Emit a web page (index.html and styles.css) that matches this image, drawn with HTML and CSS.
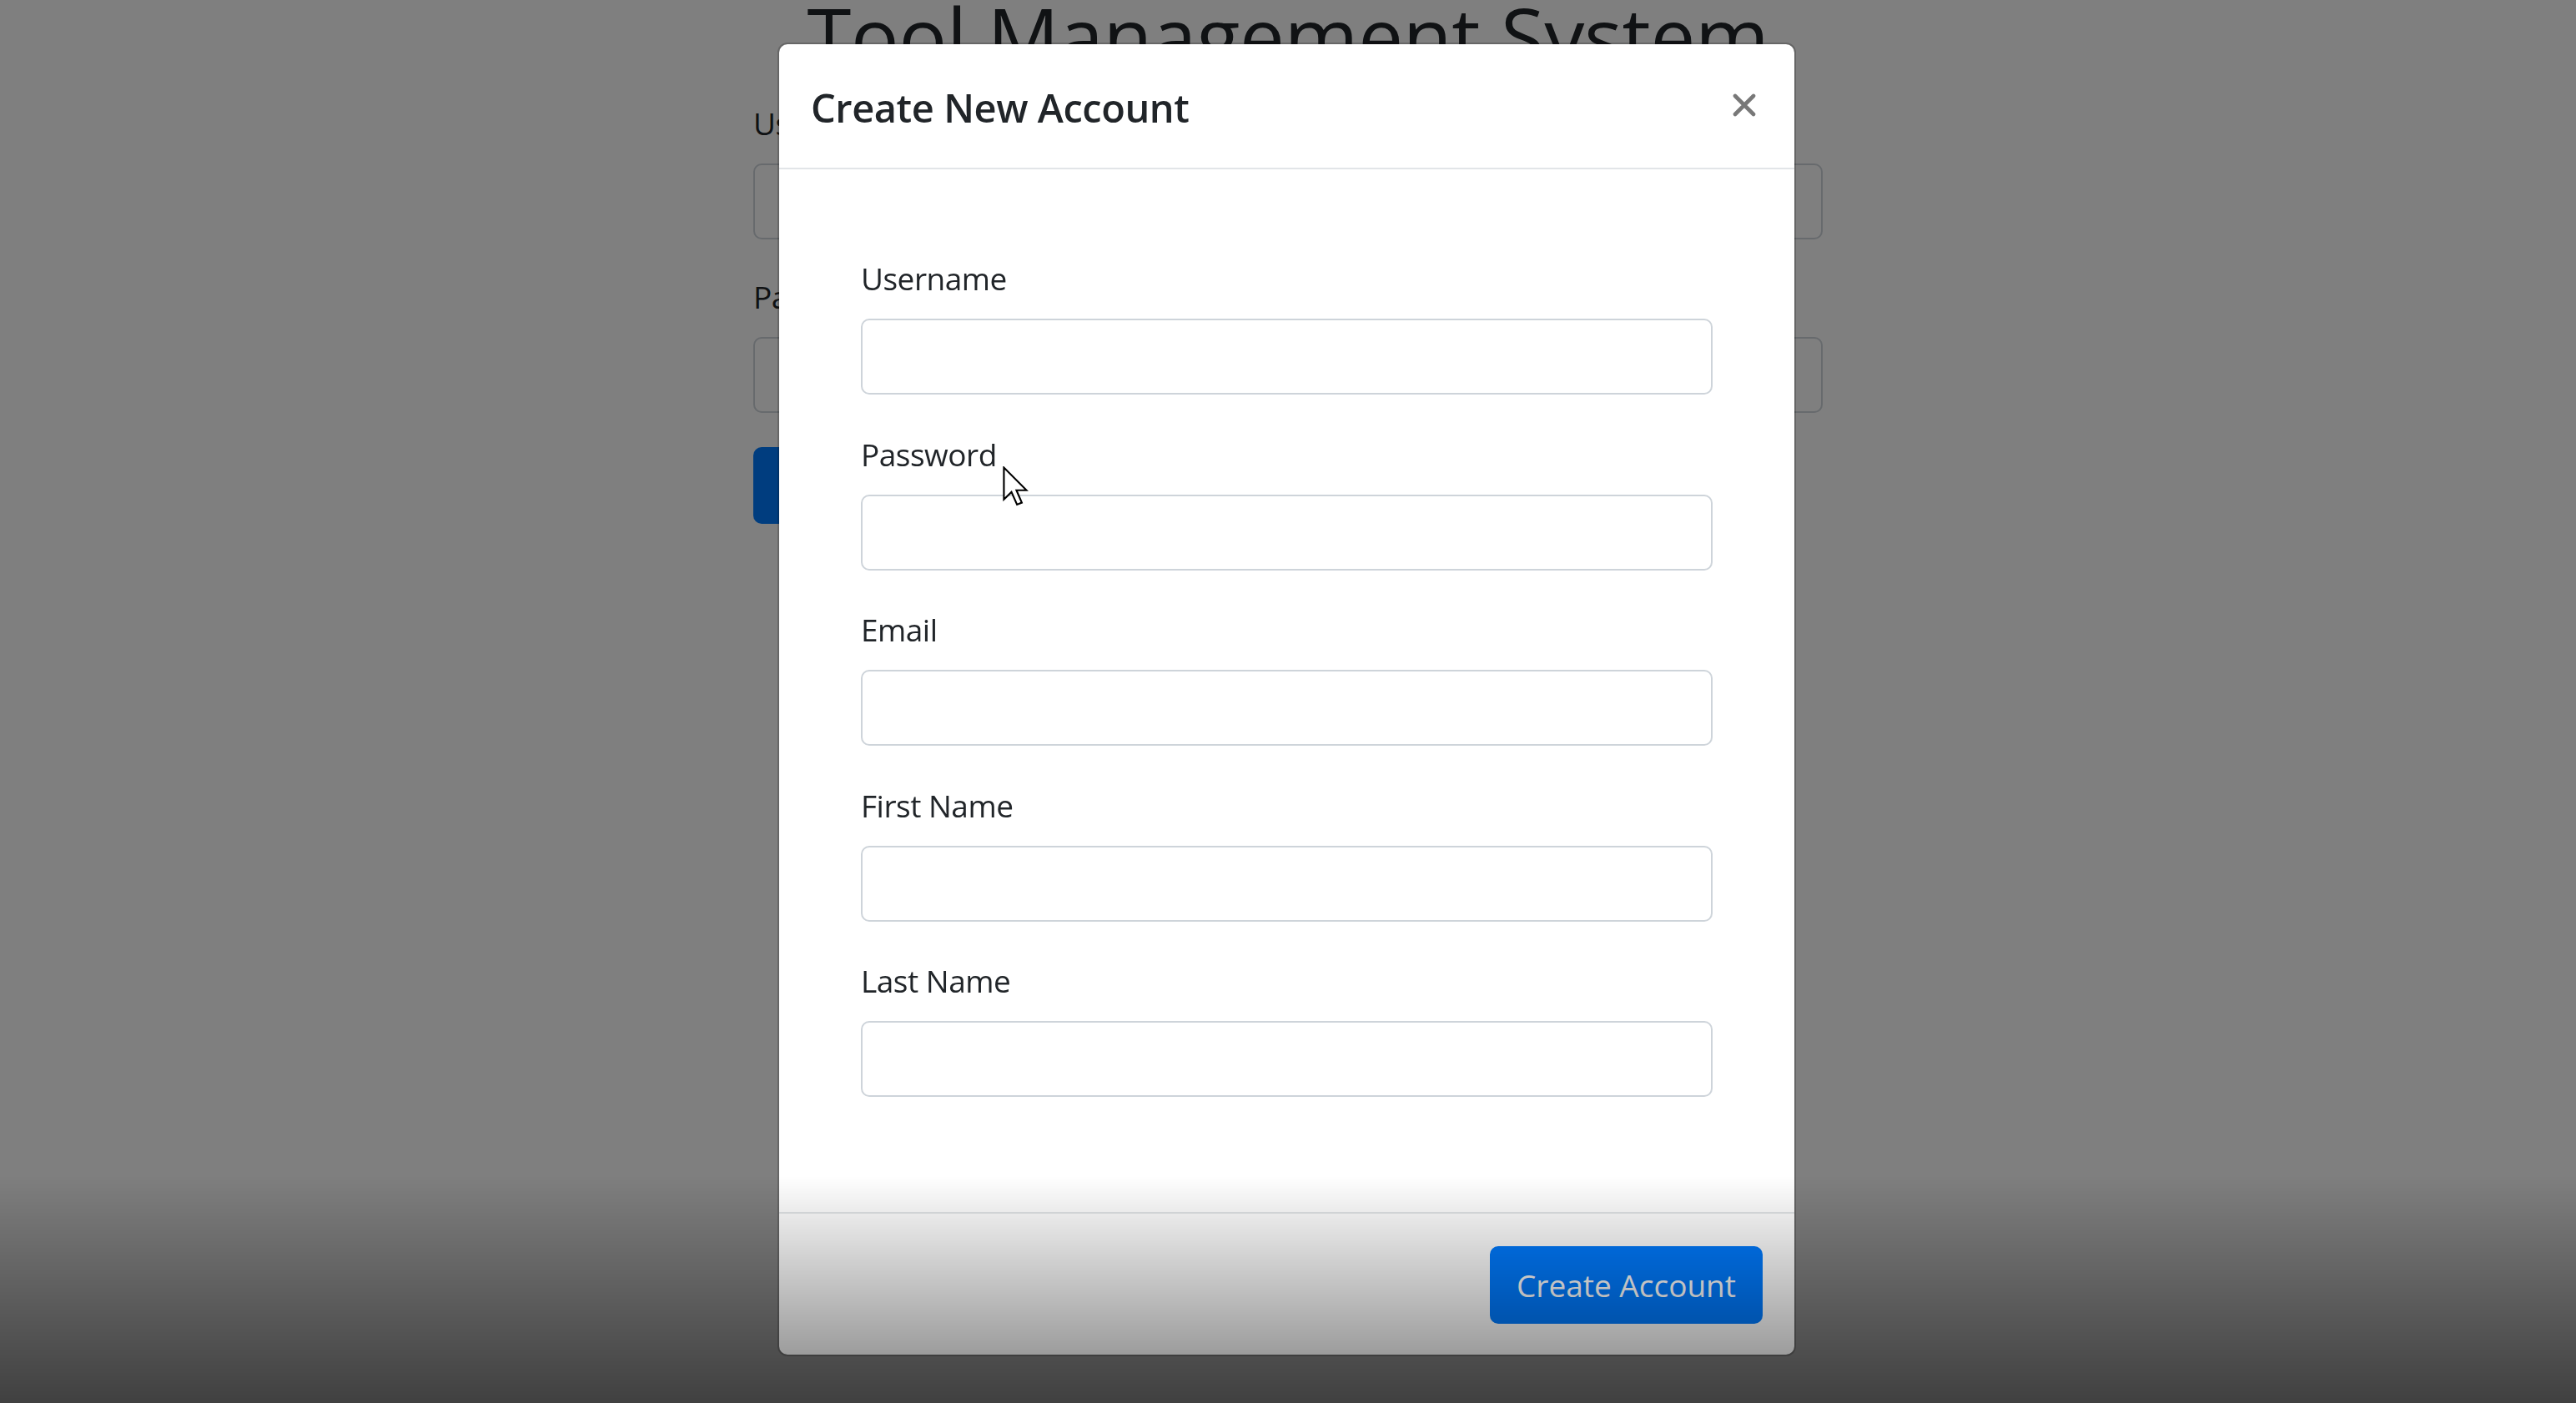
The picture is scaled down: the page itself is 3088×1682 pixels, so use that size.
FILE: index.html
```html
<!DOCTYPE html>
<html lang="en">
<head>
<meta charset="utf-8">
<title>Tool Management System</title>
<link rel="stylesheet" href="styles.css">
</head>
<body>
<main class="page">
  <h1 class="page-title">Tool Management System</h1>
  <form class="login">
    <div class="login-field">
      <label class="login-label">Username</label>
      <input class="login-input" type="text">
    </div>
    <div class="login-field">
      <label class="login-label">Password</label>
      <input class="login-input" type="password">
    </div>
    <button class="login-btn" type="button">Login</button>
  </form>
</main>

<div class="backdrop"></div>

<div class="modal-wrap">
  <div class="modal">
    <div class="modal-header">
      <h5 class="modal-title">Create New Account</h5>
      <button class="modal-close" type="button" aria-label="Close">
        <svg class="close-icon" viewBox="0 0 28 28" width="28" height="28">
          <path d="M3 3 L25 25 M25 3 L3 25" stroke="#787878" stroke-width="4.6" stroke-linecap="round" fill="none"/>
        </svg>
      </button>
    </div>
    <div class="modal-body">
      <div class="form-group">
        <label class="form-label">Username</label>
        <input class="form-input" type="text">
      </div>
      <div class="form-group">
        <label class="form-label">Password</label>
        <input class="form-input" type="password">
      </div>
      <div class="form-group">
        <label class="form-label">Email</label>
        <input class="form-input" type="email">
      </div>
      <div class="form-group">
        <label class="form-label">First Name</label>
        <input class="form-input" type="text">
      </div>
      <div class="form-group">
        <label class="form-label">Last Name</label>
        <input class="form-input" type="text">
      </div>
    </div>
    <div class="modal-footer">
      <button class="btn-primary" type="button">Create Account</button>
    </div>
  </div>
</div>

<div class="video-shade"></div>

<svg class="cursor" viewBox="0 0 13 20" width="31" height="48">
  <path d="M0.6 0.6 L0.6 16.6 L4.4 12.9 L7.2 19.2 L9.6 18.2 L6.9 12 L12 12 Z" fill="#ffffff" stroke="#000000" stroke-width="0.9" stroke-linejoin="miter"/>
</svg>
</body>
</html>
```

FILE: styles.css
```css
* {
  box-sizing: border-box;
}

html, body {
  margin: 0;
  padding: 0;
  width: 3088px;
  height: 1682px;
  overflow: hidden;
  background: #ffffff;
  font-family: "Open Sans", "Noto Sans", sans-serif;
  color: #212529;
}

/* ---------- background page ---------- */
.page {
  width: 1282px;
  margin: 0 auto;
  padding-top: 0;
}

.page-title {
  margin: -16px 0 21px;
  font-size: 96px;
  line-height: 1.2;
  font-weight: 400;
  letter-spacing: -0.3px;
  text-align: center;
  color: #212529;
}

.login {
  display: flex;
  flex-direction: column;
  align-items: flex-start;
}

.login-field {
  display: flex;
  flex-direction: column;
  width: 100%;
  margin-bottom: 41px;
}

.login-label {
  font-size: 37px;
  line-height: 56px;
  letter-spacing: -0.5px;
  margin-bottom: 20px;
}

.login-input {
  height: 91px;
  width: 100%;
  border: 2px solid #ced4da;
  border-radius: 10px;
  background: #ffffff;
}

.login-btn {
  height: 92px;
  width: 340px;
  border: 0;
  border-radius: 10px;
  background: #007bff;
  color: #ffffff;
  font-family: inherit;
  font-size: 37px;
}

.backdrop {
  position: fixed;
  inset: 0;
  background: rgba(0, 0, 0, 0.5);
}

/* ---------- modal ---------- */
.modal-wrap {
  position: fixed;
  inset: 0;
  display: flex;
  justify-content: center;
  align-items: flex-start;
  padding-top: 51px;
  padding-right: 3px;
}

.modal {
  width: 1221px;
  background: #ffffff;
  border: 2px solid rgba(0, 0, 0, 0.2);
  border-radius: 12px;
  display: flex;
  flex-direction: column;
  background-clip: padding-box;
}

.modal-header {
  height: 150px;
  display: flex;
  align-items: center;
  justify-content: space-between;
  padding: 1px 46px 0 38px;
  border-bottom: 2px solid #e2e5e8;
}

.modal-title {
  margin: 0;
  padding-top: 3px;
  font-size: 47px;
  line-height: 1.2;
  font-weight: 600;
  letter-spacing: -0.45px;
  color: #212529;
}

.modal-close {
  padding: 0;
  margin: -4px 0 0;
  border: 0;
  background: transparent;
  width: 28px;
  height: 28px;
  display: flex;
}

.close-icon {
  display: block;
}

.modal-body {
  display: flex;
  flex-direction: column;
  gap: 43.5px;
  padding: 103px 98px 138px;
}

.form-group {
  display: flex;
  flex-direction: column;
}

.form-label {
  font-size: 37px;
  line-height: 56px;
  letter-spacing: -0.5px;
  margin-bottom: 20px;
  color: #212529;
}

.form-input {
  height: 91px;
  width: 100%;
  border: 2px solid #ced4da;
  border-radius: 10px;
  background: #ffffff;
}

.modal-footer {
  display: flex;
  justify-content: flex-end;
  padding: 39px 38px 37px;
  border-top: 2px solid #e2e5e8;
}

.btn-primary {
  height: 93px;
  width: 327px;
  padding: 0;
  border: 2px solid #007bff;
  border-radius: 10px;
  background: #007bff;
  color: #ffffff;
  font-family: inherit;
  font-size: 37px;
  line-height: 1;
}

/* ---------- video player bottom shade ---------- */
.video-shade {
  position: fixed;
  left: 0;
  right: 0;
  bottom: 0;
  height: 272px;
  background: linear-gradient(to bottom, rgba(0, 0, 0, 0) 0%, rgba(0, 0, 0, 0.2) 40%, rgba(0, 0, 0, 0.49) 100%);
  pointer-events: none;
}

/* ---------- mouse pointer ---------- */
.cursor {
  position: fixed;
  left: 1202px;
  top: 559px;
}
```
